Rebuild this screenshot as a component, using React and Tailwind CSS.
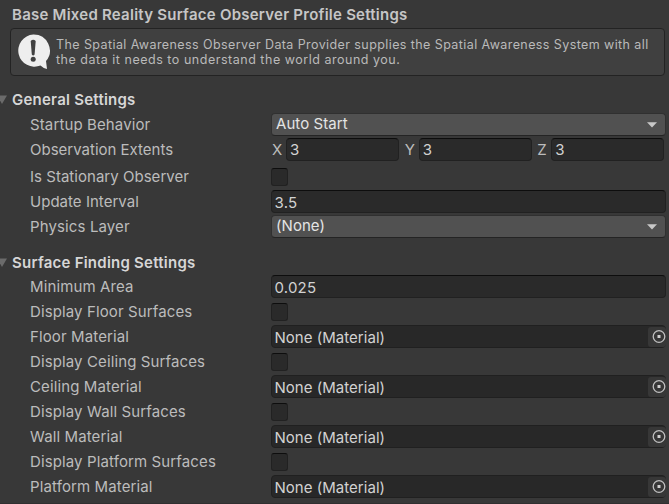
const fieldBase =
  'border border-[#212121] border-t-[#0d0d0d] bg-[#2a2a2a] rounded-[4px] h-[23px] text-[#d2d2d2]';

function Label({ children, spacing }) {
  return (
    <div className={`w-[241px] shrink-0 h-6 leading-6 text-[15px] text-[#bcbcbc] ${spacing}`}>
      {children}
    </div>
  );
}

function Row({ label, tall, spacing = 'tracking-[0.12px]', children }) {
  return (
    <div className={`flex items-start pl-[30px] ${tall ? 'h-[27px]' : 'h-[25px]'}`}>
      <Label spacing={spacing}>{label}</Label>
      {children}
    </div>
  );
}

function Dropdown({ value }) {
  return (
    <div className="flex h-[23px] w-[395px] items-center justify-between rounded-[4px] border border-[#303030] border-b-[#242424] bg-[#515151] pr-2 pl-1 text-[15px] tracking-[0.06px] text-[#e4e4e4]">
      <span className="h-[21px] leading-[20px]">{value}</span>
      <svg width="10" height="6" viewBox="0 0 10 6" className="shrink-0">
        <path d="M0 0.3H10L5 5.6Z" fill="#c8c8c8" />
      </svg>
    </div>
  );
}

function TextField({ value }) {
  return (
    <div className={`${fieldBase} w-[395px] pl-[2.5px] text-[15px] leading-[23px] tracking-[0.2px]`}>
      {value}
    </div>
  );
}

function Checkbox() {
  return (
    <div className="mt-[3px] h-[18px] w-[17px] rounded-[3px] border border-[#212121] border-t-[#0d0d0d] bg-[#2a2a2a]" />
  );
}

function Axis({ name, value }) {
  return (
    <div className="flex w-[133px] items-start">
      <span className="w-[15px] pl-px text-[15px] leading-6 text-[#bcbcbc]">{name}</span>
      <div className={`${fieldBase} w-[113px] pl-[3px] text-[15px] leading-[22px]`}>{value}</div>
    </div>
  );
}

function ObjectField() {
  return (
    <div className="flex h-[23px] w-[395px] justify-between rounded-[4px] border border-[#202020] bg-[#282828] pl-[2.5px] text-[#d2d2d2]">
      <span className="text-[15px] leading-[23px] tracking-[0.03px]">None (Material)</span>
      <div className="mt-px -mr-px flex h-5 w-[18px] items-center justify-end rounded-[3px] bg-[#373737]">
        <svg width="14" height="14" viewBox="0 0 14 14" className="shrink-0">
          <circle cx="7" cy="6.5" r="5.8" fill="none" stroke="#c0c0c0" strokeWidth="1.3" />
          <rect x="5.5" y="5" width="3" height="3" fill="#d0d0d0" />
        </svg>
      </div>
    </div>
  );
}

function SectionTitle({ children }) {
  return (
    <div className="flex h-6 items-center">
      <svg width="12" height="10" viewBox="0 0 12 10" className="shrink-0">
        <path d="M-3 0.5H7L2 9Z" fill="#6b6b6b" />
      </svg>
      <h2 className="text-[15px] leading-6 font-semibold tracking-[0.24px] text-[#d6d6d6]">{children}</h2>
    </div>
  );
}

export default function App() {
  return (
    <div className="h-[504px] w-[669px] overflow-hidden border-b border-[#302f30] bg-[#383838] font-['Inter','Liberation_Sans',sans-serif] whitespace-nowrap">
      <h1 className="h-7 pt-[3px] pl-3 text-[15px] leading-6 font-semibold tracking-[0.24px] text-[#c6c6c6]">
        Base Mixed Reality Surface Observer Profile Settings
      </h1>
      <div className="ml-[10px] flex h-12 w-[655px] rounded-[4px] border border-[#232323] bg-[#404040]">
        <svg width="34" height="36" viewBox="0 0 34 36" className="mt-[5px] ml-[6px] shrink-0">
          <path
            d="M16.3 0.5A16.2 16.1 0 1 0 23.5 31.5Q26.5 34.5 30 35L29 27A16.2 16.1 0 0 0 16.3 0.5Z"
            fill="#eeeeee"
          />
          <path d="M13.7 7Q16.2 4.6 18.7 7L17.6 20.5Q16.2 22.3 14.8 20.5Z" fill="#404040" />
          <circle cx="16.2" cy="25.2" r="2.5" fill="#404040" />
        </svg>
        <p className="mt-2 ml-[5px] text-[12.5px] leading-[15px] text-[#bababa]">
          <span className="block tracking-[0.41px]">
            The Spatial Awareness Observer Data Provider supplies the Spatial Awareness System with all
          </span>
          <span className="block tracking-[0.52px]">the data it needs to understand the world around you.</span>
        </p>
      </div>

      <section className="pt-3">
        <SectionTitle>General Settings</SectionTitle>
        <div className="pt-px">
          <Row label="Startup Behavior"><Dropdown value="Auto Start" /></Row>
          <Row label="Observation Extents" tall spacing="tracking-[0px]">
            <Axis name="X" value="3" />
            <Axis name="Y" value="3" />
            <Axis name="Z" value="3" />
          </Row>
          <Row label="Is Stationary Observer" spacing="tracking-[0.03px]"><Checkbox /></Row>
          <Row label="Update Interval" spacing="tracking-[0.03px]"><TextField value="3.5" /></Row>
          <Row label="Physics Layer"><Dropdown value="(None)" /></Row>
        </div>
      </section>

      <section className="pt-[11px]">
        <SectionTitle>Surface Finding Settings</SectionTitle>
        <Row label="Minimum Area"><TextField value="0.025" /></Row>
        <Row label="Display Floor Surfaces"><Checkbox /></Row>
        <Row label="Floor Material"><ObjectField /></Row>
        <Row label="Display Ceiling Surfaces"><Checkbox /></Row>
        <Row label="Ceiling Material"><ObjectField /></Row>
        <Row label="Display Wall Surfaces"><Checkbox /></Row>
        <Row label="Wall Material"><ObjectField /></Row>
        <Row label="Display Platform Surfaces"><Checkbox /></Row>
        <Row label="Platform Material"><ObjectField /></Row>
      </section>
    </div>
  );
}
